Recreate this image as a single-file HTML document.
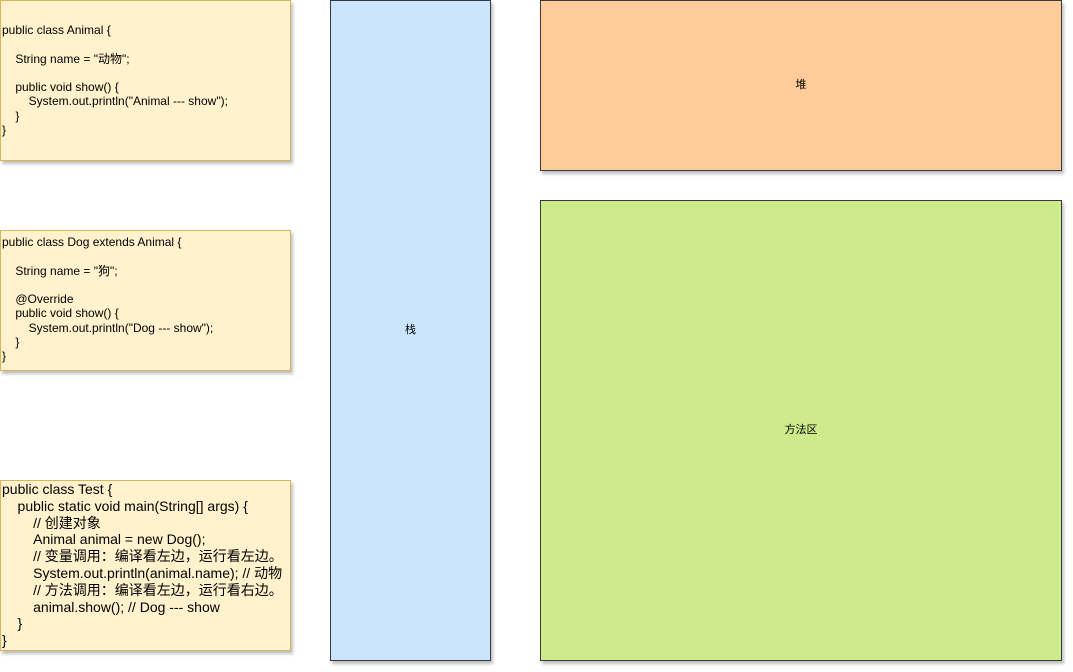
<!DOCTYPE html>
<html><head><meta charset="utf-8"><style>
body{margin:0;width:1073px;height:672px;background:#fff;position:relative;overflow:hidden;font-family:"Liberation Sans","Noto Sans CJK SC",sans-serif;color:#000}
.b{position:absolute;box-sizing:border-box;box-shadow:2px 3px 3px rgba(0,0,0,0.25)}
.y{background:#fff2cc;border:1px solid #d6b656}
.t{position:absolute;left:2px;white-space:pre;font-size:12px;line-height:14.3px}
.c{display:flex;align-items:center;justify-content:center;font-size:11px;border:1px solid #36393d;padding-bottom:3px}
</style></head><body>
<div class="b y" style="left:0;top:0;width:291px;height:161px"></div>
<div class="t" style="top:23px">public class Animal {

    String name = "动物";

    public void show() {
        System.out.println("Animal --- show");
    }
}</div>
<div class="b y" style="left:0;top:230px;width:291px;height:141px"></div>
<div class="t" style="top:235px">public class Dog extends Animal {

    String name = "狗";

    @Override
    public void show() {
        System.out.println("Dog --- show");
    }
}</div>
<div class="b y" style="left:0;top:480px;width:291px;height:171px"></div>
<div class="t" style="top:481px;font-size:14px;line-height:16.8px">public class Test {
    public static void main(String[] args) {
        // 创建对象
        Animal animal = new Dog();
        // 变量调用：编译看左边，运行看左边。
        System.out.println(animal.name); // 动物
        // 方法调用：编译看左边，运行看右边。
        animal.show(); // Dog --- show
    }
}</div>
<div class="b c" style="left:330px;top:0;width:161px;height:661px;background:#cce5ff">栈</div>
<div class="b c" style="left:540px;top:0;width:522px;height:171px;background:#ffcc99">堆</div>
<div class="b c" style="left:540px;top:200px;width:522px;height:461px;background:#cdeb8b">方法区</div>
</body></html>
